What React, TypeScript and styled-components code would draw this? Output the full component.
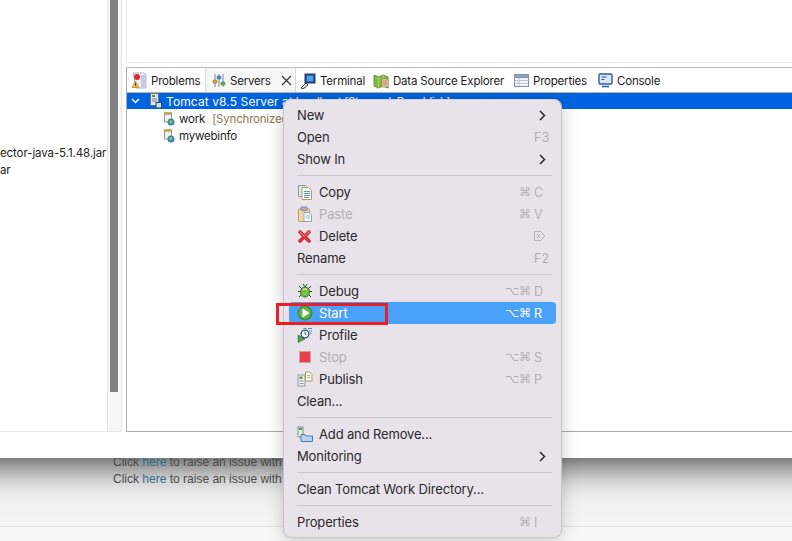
import React from 'react';
import styled, { createGlobalStyle } from 'styled-components';

const GlobalStyle = createGlobalStyle`
  html, body {
    margin: 0;
    padding: 0;
    background: #f8f8f8;
  }
  * {
    box-sizing: border-box;
  }
`;

const SANS = `Inter, 'Liberation Sans', 'DejaVu Sans', sans-serif`;

const Page = styled.div`
  position: relative;
  width: 792px;
  height: 541px;
  overflow: hidden;
  display: flex;
  flex-direction: column;
  font-family: ${SANS};
`;

/* ---------- eclipse window ---------- */

const Window = styled.div`
  position: relative;
  z-index: 1;
  height: 458px;
  flex: none;
  background: #fff;
  padding-bottom: 26px;
  display: flex;
`;

const LeftPanel = styled.div`
  width: 108px;
  flex: none;
  border-right: 1px solid #e6e6e6;
  border-bottom: 1px solid #e6e6e6;
  padding-top: 145px;
  font-size: 11.5px;
  letter-spacing: -0.1px;
  color: #222;
  overflow: hidden;
`;

const JarRow = styled.div`
  height: 17px;
  line-height: 17px;
  white-space: nowrap;
`;

const ScrollTrack = styled.div`
  width: 14px;
  flex: none;
  background: #f7f7f7;
  border-right: 1px solid #e6e6e6;
  border-bottom: 1px solid #e6e6e6;
  padding-left: 2px;
`;

const ScrollThumb = styled.div`
  width: 8px;
  height: 392px;
  background: #808080;
`;

const RightSide = styled.div`
  flex: 1;
  min-width: 0;
  display: flex;
  flex-direction: column;
  padding-left: 4px;
`;

const EditorArea = styled.div`
  height: 63px;
  flex: none;
  border-left: 1px solid #e6e6e6;
  border-bottom: 1px solid #e6e6e6;
`;

const ViewsPanel = styled.div`
  flex: 1;
  margin-top: 4px;
  border-left: 1px solid #aaa;
  border-top: 1px solid #bbb;
  border-bottom: 1px solid #aaa;
  display: flex;
  flex-direction: column;
`;

const TabBar = styled.div`
  height: 25px;
  flex: none;
  display: flex;
  align-items: stretch;
  border-bottom: 1px solid #b5b5b5;
  font-size: 11.5px;
  letter-spacing: -0.2px;
  color: #1c1c1c;
`;

const Tab = styled.div<{ $active?: boolean; $width: number }>`
  width: ${(p) => p.$width}px;
  flex: none;
  display: flex;
  align-items: center;
  gap: 4px;
  white-space: nowrap;
  padding-top: 1px;
  padding-left: ${(p) => (p.$active ? 6 : 4)}px;
  background: ${(p) => (p.$active ? '#f6f6f6' : '#fff')};
  border-left: ${(p) => (p.$active ? '1px solid #dcdcdc' : 'none')};
  border-right: ${(p) => (p.$active ? '1px solid #dcdcdc' : 'none')};
`;

const TabClose = styled.svg`
  margin-left: 6px;
`;

const TreeRow = styled.div<{ $selected?: boolean; $indent: number }>`
  height: ${(p) => (p.$selected ? 16 : 17)}px;
  flex: none;
  display: flex;
  align-items: center;
  gap: 4px;
  white-space: pre;
  font-size: 11.5px;
  letter-spacing: -0.2px;
  padding-left: ${(p) => p.$indent}px;
  color: ${(p) => (p.$selected ? '#fff' : '#1c1c1c')};
  background: ${(p) => (p.$selected ? '#0064e1' : 'transparent')};
`;

const TreeChevron = styled.svg`
  margin-right: 6px;
`;

const ServerName = styled.span`
  font-size: 12px;
  letter-spacing: 0.1px;
`;

const ServerState = styled.span`
  letter-spacing: -0.4px;
`;

const TreeGap = styled.div`
  height: 1px;
  flex: none;
`;

const Decoration = styled.span`
  color: #8b7a4e;
  margin-left: 3px;
`;

/* ---------- page behind the window ---------- */

const BehindPage = styled.div`
  flex: 1;
  display: flex;
  flex-direction: column;
  background: linear-gradient(to bottom, #7d7d7d 0, #a9a9a9 11px, #d0d0d0 22px, #e7e7e7 33px, #f1f1f1 45px, #f5f5f5 69px);
`;

const IssueLines = styled.div`
  margin-top: -4px;
  height: 73px;
  padding-left: 113px;
  font-family: 'Liberation Sans', Arial, sans-serif;
  font-size: 12px;
  line-height: 17px;
  color: #4a4a4a;
  border-bottom: 1px solid #e3e3e3;
`;

const IssueLine = styled.div`
  white-space: nowrap;
`;

const IssueLink = styled.span`
  color: #33708c;
`;

const FooterStrip = styled.div`
  flex: 1;
  background: #f8f8f8;
`;

/* ---------- context menu ---------- */

const Menu = styled.div`
  position: absolute;
  z-index: 2;
  left: 283px;
  top: 99px;
  width: 279px;
  height: 439px;
  padding: 4px 5px;
  background: #e8e3ea;
  border: 1px solid #c6c3c8;
  border-top-color: #d6d3d8;
  border-radius: 8px;
  box-shadow: 0 3px 18px rgba(0, 0, 0, 0.2);
  color: #2b282d;
  font-size: 13px;
  letter-spacing: -0.15px;
`;

const Row = styled.div<{ $active?: boolean; $disabled?: boolean }>`
  height: 22px;
  display: flex;
  align-items: center;
  padding: 0 11px 0 8px;
  border-radius: 4px;
  background: ${(p) => (p.$active ? '#4aa1f8' : 'transparent')};
  color: ${(p) => (p.$active ? '#fff' : p.$disabled ? '#b3aeb6' : '#2b282d')};
`;

const RowIcon = styled.span`
  width: 22px;
  height: 16px;
  flex: none;
  display: flex;
  align-items: center;
`;

const RowLabel = styled.span`
  flex: 1;
  white-space: nowrap;
`;

const Shortcut = styled.span<{ $active?: boolean }>`
  display: flex;
  align-items: center;
  gap: 3px;
  color: ${(p) => (p.$active ? '#fff' : '#b3aeb6')};
  font-family: 'DejaVu Sans', sans-serif;
  font-size: 12px;
  letter-spacing: 0;
`;

const ShortcutKey = styled.span`
  width: 11px;
  font-family: ${SANS};
  font-size: 12.5px;
  white-space: nowrap;
`;

const SubmenuArrow = styled.svg`
  margin-right: -1px;
`;

const Separator = styled.div`
  height: 1px;
  margin: 5px 4px 5px 8px;
  background: #cdc8cf;
`;

const RedMark = styled.div`
  position: absolute;
  z-index: 3;
  left: 276px;
  top: 303px;
  width: 112px;
  height: 22px;
  border: 3px solid #ee1c25;
`;

/* ---------- icons ---------- */

const ProblemsIcon = () => (
  <svg width="16" height="17" viewBox="0 0 16 17">
    <path d="M2 1h11l2 2v13H5z" fill="#eef1f7" stroke="#a9b5cf" />
    <path d="M11 3v12M13 3v12" stroke="#93a3c6" />
    <circle cx="6" cy="5" r="3" fill="#e5222e" />
    <path d="M4.500 9 1 15.500h7z" fill="#eeb23c" stroke="#b5801f" strokeWidth=".6" />
    <path d="M4.500 11v2.500" stroke="#5a3f0a" />
  </svg>
);

const ServersIcon = () => (
  <svg width="14" height="15" viewBox="0 0 14 15">
    <path d="M3 1v13M7 1v13M11 1v13" stroke="#7a8794" />
    <rect x="1" y="7" width="4" height="3" rx="1" fill="#e1a92e" stroke="#8a6a1b" strokeWidth=".6" />
    <rect x="5" y="3" width="4" height="3" rx="1" fill="#4a8fd1" stroke="#2c5e8f" strokeWidth=".6" />
    <rect x="9" y="9" width="4" height="3" rx="1" fill="#69ad63" stroke="#3d7a39" strokeWidth=".6" />
  </svg>
);

const TerminalIcon = () => (
  <svg width="16" height="16" viewBox="0 0 16 16">
    <rect x="5" y="1" width="10" height="9" fill="#1f5fb5" stroke="#26303f" />
    <rect x="7" y="3" width="6" height="5" fill="#4fa2e8" />
    <path d="m1 15 5-5 2 2-5 4z" fill="#e8e8e8" stroke="#333" />
  </svg>
);

const DataIcon = () => (
  <svg width="16" height="16" viewBox="0 0 16 16">
    <path d="m1 2 4.500 2L10 2l5 2v11l-5-2-4.500 2L1 13z" fill="#7dbb4b" stroke="#4e7f26" strokeWidth=".8" />
    <path d="M5.500 4v11M10 2v11" stroke="#d8c23e" />
    <rect x="9" y="6" width="6" height="8" fill="#f1ead1" stroke="#8c6d2a" strokeWidth=".6" />
    <path d="M10 8h4M10 10h4M10 12h4" stroke="#c0392b" strokeWidth=".8" />
  </svg>
);

const PropertiesIcon = () => (
  <svg width="15" height="15" viewBox="0 0 15 15">
    <rect x=".5" y="1.500" width="14" height="12" fill="#f2f4f7" stroke="#7f93ab" />
    <rect x=".5" y="1.500" width="14" height="3" fill="#8ea4bd" stroke="#7f93ab" />
    <path d="M5 5v8M1 7.500h13M1 10.500h13" stroke="#b8c4d2" />
  </svg>
);

const ConsoleIcon = () => (
  <svg width="15" height="15" viewBox="0 0 15 15">
    <rect x="1" y="1" width="13" height="10" rx="1" fill="#dbe7f4" stroke="#2f5f9c" strokeWidth="1.400" />
    <path d="M3.500 4h5M3.500 6.500h3" stroke="#2f5f9c" />
    <path d="M4 13.500h7" stroke="#2f5f9c" strokeWidth="1.600" />
  </svg>
);

const ServerIcon = () => (
  <svg width="12" height="16" viewBox="0 0 12 16">
    <rect x=".5" y=".5" width="8" height="12" fill="#dfe3ea" stroke="#69727f" />
    <rect x="2" y="2" width="3" height="2" fill="#3aa04a" />
    <path d="M2 6h5M2 8h5" stroke="#7d8794" />
    <rect x="6" y="9.500" width="5.500" height="5.500" fill="#cfe0f2" stroke="#23477a" />
  </svg>
);

const ModuleIcon = () => (
  <svg width="12" height="15" viewBox="0 0 12 15">
    <path d="M1.500 3h7v8h-7z" fill="#f5f1e2" stroke="#8a98aa" />
    <path d="M1.500 1.500h7V3h-7z" fill="#e4bd6a" stroke="#a98a3c" strokeWidth=".7" />
    <circle cx="8" cy="11" r="3.500" fill="#3a82c4" />
    <path d="M6 10c1.500-1.500 3-1 4 .5-1 .500-1.500 2-3 2.500z" fill="#8fbf4d" />
  </svg>
);

const CopyIcon = () => (
  <svg width="16" height="16" viewBox="0 0 16 16">
    <path d="M1.500 1.500h7l1 1v10h-8z" fill="#dfe8f2" stroke="#7f98b3" />
    <path d="M5 3.500h6.500l3 3v9H5z" fill="#fbfbf6" stroke="#b39b5e" />
    <path d="M7 7.500h6M7 9.500h6M7 11.500h6M7 13.500h5" stroke="#5a93c6" />
  </svg>
);

const PasteIcon = () => (
  <svg width="16" height="16" viewBox="0 0 16 16">
    <rect x="1.500" y="3" width="11" height="12.500" rx="1" fill="#efd6a5" stroke="#c49a57" />
    <rect x="4" y="1" width="6" height="3.500" rx="1" fill="#aab5c4" stroke="#7f8a9a" />
    <path d="M7 6.500h5l2.500 2.500v6.500H7z" fill="#fbfbfb" stroke="#8ea2b8" />
    <path d="M9 10h4M9 12h4" stroke="#8fb1d2" />
  </svg>
);

const DeleteIcon = () => (
  <svg width="15" height="15" viewBox="0 0 15 15">
    <path d="M3 3 12 12M12 3 3 12" stroke="#d9343c" strokeWidth="3.800" strokeLinecap="round" />
    <path d="M2.500 2.500 7 7M12.500 2.500 8 7" stroke="#f08a8a" strokeWidth="1" strokeLinecap="round" />
  </svg>
);

const DebugIcon = () => (
  <svg width="16" height="16" viewBox="0 0 16 16">
    <path d="M2 3 5 6M14 3l-3 3M1 8.500h3M12 8.500h3M2 14l3-3M14 14l-3-3M6 1l2 3M10 1 8 4" stroke="#234a32" strokeWidth="1" />
    <ellipse cx="8" cy="9" rx="4.500" ry="5" fill="#7fbf3f" stroke="#2f6b3a" />
    <path d="M6 6.500c1.500-1 3-1 4 .5" stroke="#d8ecaa" strokeWidth="1.200" fill="none" />
  </svg>
);

const StartIcon = () => (
  <svg width="16" height="16" viewBox="0 0 16 16">
    <circle cx="8" cy="8" r="7.500" fill="#3f9140" />
    <circle cx="8" cy="8" r="5.800" fill="#6db34d" />
    <path d="M5.500 3.500v9l7-4.500z" fill="#fff" />
  </svg>
);

const ProfileIcon = () => (
  <svg width="16" height="16" viewBox="0 0 16 16">
    <path d="M1 8v7.500L8 12z" fill="#4aa148" stroke="#2f7030" strokeWidth=".6" />
    <circle cx="8" cy="7" r="3.800" fill="#fff" stroke="#23577f" strokeWidth="1.300" />
    <path d="M8 4.800V7l1.500 1" stroke="#23577f" fill="none" />
    <path d="M6.500 1.500h3M11 1.500h4M12 4h3M12.500 6.500h2" stroke="#5f8fc2" />
  </svg>
);

const StopIcon = () => (
  <svg width="16" height="16" viewBox="0 0 16 16">
    <rect x="2.500" y="2.500" width="11" height="11" fill="#e8404a" stroke="#c9a5ab" />
  </svg>
);

const PublishIcon = () => (
  <svg width="16" height="16" viewBox="0 0 16 16">
    <rect x="1" y="4" width="7" height="11" fill="#eef1e4" stroke="#8b9aa8" />
    <rect x="2.500" y="5.500" width="3" height="2.500" fill="#4fa04f" />
    <path d="M2.500 10h4M2.500 12.500h4" stroke="#8b9aa8" />
    <path d="M8.500 1h4l2.500 2.500V10H8.500z" fill="#fffdf2" stroke="#b39b5e" />
    <path d="M10 4.500h3.500M10 6.500h3.500" stroke="#c9b278" />
  </svg>
);

const AddRemoveIcon = () => (
  <svg width="16" height="16" viewBox="0 0 16 16">
    <rect x="1" y="1" width="5" height="10" fill="#e9efe2" stroke="#7f9184" />
    <rect x="2" y="2" width="3" height="2" fill="#3aa04a" />
    <path d="M4 8.500h4l1 1.500h6.500v5.500H4z" fill="#b5d3ec" stroke="#4f7da5" />
  </svg>
);

const DeleteKeyGlyph = () => (
  <svg width="11" height="10" viewBox="0 0 11 10" fill="none" stroke="currentColor">
    <path d="M.5.500h6.500L10.500 5 7 9.500H.5z" />
    <path d="m3 3 3 4M6 3 3 7" />
  </svg>
);

const MenuArrow = () => (
  <SubmenuArrow width="7" height="11" viewBox="0 0 7 11" fill="none" stroke="#2b282d" strokeWidth="1.500">
    <path d="m1 1 4.500 4.500L1 10" />
  </SubmenuArrow>
);

/* ---------- data ---------- */

type Item =
  | { sep: true }
  | {
      sep?: false;
      label: string;
      icon?: React.ReactNode;
      mods?: string;
      keyName?: React.ReactNode;
      arrow?: boolean;
      disabled?: boolean;
      active?: boolean;
    };

const ITEMS: Item[] = [
  { label: 'New', arrow: true },
  { label: 'Open', keyName: 'F3' },
  { label: 'Show In', arrow: true },
  { sep: true },
  { label: 'Copy', icon: <CopyIcon />, mods: '⌘', keyName: 'C' },
  { label: 'Paste', icon: <PasteIcon />, mods: '⌘', keyName: 'V', disabled: true },
  { label: 'Delete', icon: <DeleteIcon />, keyName: <DeleteKeyGlyph /> },
  { label: 'Rename', keyName: 'F2' },
  { sep: true },
  { label: 'Debug', icon: <DebugIcon />, mods: '⌥⌘', keyName: 'D' },
  { label: 'Start', icon: <StartIcon />, mods: '⌥⌘', keyName: 'R', active: true },
  { label: 'Profile', icon: <ProfileIcon /> },
  { label: 'Stop', icon: <StopIcon />, mods: '⌥⌘', keyName: 'S', disabled: true },
  { label: 'Publish', icon: <PublishIcon />, mods: '⌥⌘', keyName: 'P' },
  { label: 'Clean...' },
  { sep: true },
  { label: 'Add and Remove...', icon: <AddRemoveIcon /> },
  { label: 'Monitoring', arrow: true },
  { sep: true },
  { label: 'Clean Tomcat Work Directory...' },
  { sep: true },
  { label: 'Properties', mods: '⌘', keyName: 'I' },
];

const TABS = [
  { label: 'Problems', icon: <ProblemsIcon />, width: 78 },
  { label: 'Servers', icon: <ServersIcon />, width: 91, active: true },
  { label: 'Terminal', icon: <TerminalIcon />, width: 73 },
  { label: 'Data Source Explorer', icon: <DataIcon />, width: 141 },
  { label: 'Properties', icon: <PropertiesIcon />, width: 84 },
  { label: 'Console', icon: <ConsoleIcon />, width: 80 },
];

export default function App() {
  return (
    <Page>
      <GlobalStyle />
      <Window>
        <LeftPanel>
          <JarRow>ector-java-5.1.48.jar</JarRow>
          <JarRow>ar</JarRow>
        </LeftPanel>
        <ScrollTrack>
          <ScrollThumb />
        </ScrollTrack>
        <RightSide>
          <EditorArea />
          <ViewsPanel>
            <TabBar>
              {TABS.map((t) => (
                <Tab key={t.label} $active={t.active} $width={t.width}>
                  {t.icon}
                  {t.label}
                  {t.active && (
                    <TabClose width="11" height="11" viewBox="0 0 11 11" stroke="#333" strokeWidth="1.200">
                      <path d="m1 1 9 9M10 1l-9 9" />
                    </TabClose>
                  )}
                </Tab>
              ))}
            </TabBar>
            <TreeRow $selected $indent={4}>
              <TreeChevron width="9" height="6" viewBox="0 0 9 6" fill="none" stroke="#fff" strokeWidth="1.500">
                <path d="m1 1 3.500 3.500L8 1" />
              </TreeChevron>
              <ServerIcon />
              <span>
                <ServerName>Tomcat v8.5 Server at</ServerName>
                <ServerState> localhost [Stopped, Republish]</ServerState>
              </span>
            </TreeRow>
            <TreeGap />
            <TreeRow $indent={36}>
              <ModuleIcon />
              work
              <Decoration>[Synchronized]</Decoration>
            </TreeRow>
            <TreeRow $indent={36}>
              <ModuleIcon />
              mywebinfo
            </TreeRow>
          </ViewsPanel>
        </RightSide>
      </Window>
      <BehindPage>
        <IssueLines>
          <IssueLine>
            Click <IssueLink>here</IssueLink> to raise an issue with
          </IssueLine>
          <IssueLine>
            Click <IssueLink>here</IssueLink> to raise an issue with
          </IssueLine>
        </IssueLines>
        <FooterStrip />
      </BehindPage>
      <Menu>
        {ITEMS.map((item, i) =>
          item.sep ? (
            <Separator key={i} />
          ) : (
            <Row key={item.label} $active={item.active} $disabled={item.disabled}>
              {item.icon && <RowIcon>{item.icon}</RowIcon>}
              <RowLabel>{item.label}</RowLabel>
              {item.arrow && <MenuArrow />}
              {item.keyName && (
                <Shortcut $active={item.active}>
                  {item.mods}
                  <ShortcutKey>{item.keyName}</ShortcutKey>
                </Shortcut>
              )}
            </Row>
          ),
        )}
      </Menu>
      <RedMark />
    </Page>
  );
}
